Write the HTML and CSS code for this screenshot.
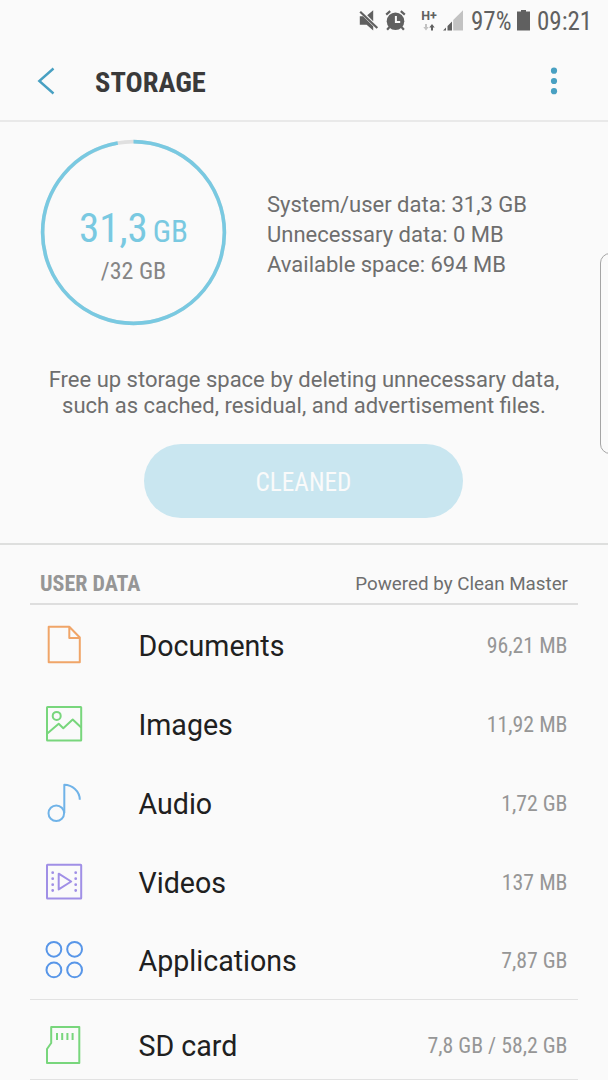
FILE: index.html
```html
<!DOCTYPE html>
<html lang="en">
<head>
<meta charset="utf-8">
<title>Storage</title>
<link rel="stylesheet" href="styles.css">
</head>
<body>
<div class="status">
  <svg class="mute" width="20" height="22" viewBox="0 0 20 22"><path d="M.8 6.2H4l10.2 10v4.2L7.6 14.8H.8zM8.2 5.2 14.2.2v11z"/><path class="slash" d="M1.2 1.8 18.3 18"/></svg>
  <svg class="alarm" width="22" height="22" viewBox="0 0 22 22"><circle cx="10.5" cy="11.2" r="8.8"/><path class="slash" d="m1.2 4.6 4-3.5M19.8 4.6l-4-3.5M4.5 17l-2.4 2.8M16.5 17l2.4 2.8"/><path class="hand" d="M10.9 6v6.1h4.3"/></svg>
  <div class="network"><span>H+</span><svg width="12" height="7" viewBox="0 0 12 7"><path class="down" d="M2 0h2v3h1.7L3 6.5.3 3H2z"/><path d="M8 6.5h2v-3h1.7L9 0 6.3 3.5H8z"/></svg></div>
  <svg class="signal" width="21" height="21" viewBox="0 0 21 21"><path class="weak" d="M10.2 10 20 .2v20.3h-9.8z"/><path d="M0 20.5 3 17.6v2.9zM4.5 16 9 11.6v8.9H4.5z"/></svg>
  <span class="cond pct">97%</span>
  <svg class="battery" width="13" height="21" viewBox="0 0 13 21"><path d="M4 0h5v1.6h4v18.9H0V1.6h4z"/></svg>
  <span class="cond clock">09:21</span>
</div>
<header class="bar">
  <svg class="back" width="18" height="28" viewBox="0 0 18 28"><path d="M16.5 1.5 2.3 14l14.2 12.5"/></svg>
  <h1 class="cond title">STORAGE</h1>
  <svg class="more" width="8" height="28" viewBox="0 0 8 28"><circle cx="4" cy="3.7" r="3.1"/><circle cx="4" cy="14" r="3.1"/><circle cx="4" cy="24.2" r="3.1"/></svg>
</header>
<section class="overview">
  <div class="usage">
    <div class="gauge">
      <svg class="ring" width="187" height="187" viewBox="0 0 187 187"><circle class="track" cx="93.5" cy="93.5" r="90.9"/><circle class="fill" cx="93.5" cy="93.5" r="90.9" pathLength="360" stroke-dasharray="350 10"/></svg>
      <div class="amount cond"><span class="num">31,3</span><span class="unit">GB</span></div>
      <div class="total cond">/32 GB</div>
    </div>
    <div class="facts">
      <div>System/user data: 31,3 GB</div>
      <div>Unnecessary data: 0 MB</div>
      <div>Available space: 694 MB</div>
    </div>
  </div>
  <p class="hint">Free up storage space by deleting unnecessary data,<br>such as cached, residual, and advertisement files.</p>
  <button class="clean cond">CLEANED</button>
</section>
<section class="userdata">
  <div class="heading"><h2 class="cond">USER DATA</h2><span class="powered">Powered by Clean Master</span></div>
  <div class="row"><svg class="icon doc" viewBox="0 0 40 40"><path d="M4.7 1.7H25.3L35.8 12.5V37.2H4.7zM25.3 2V13H35.6"/></svg><span class="name">Documents</span><span class="size cond">96,21 MB</span></div>
  <div class="row"><svg class="icon img" viewBox="0 0 40 40"><rect x="3" y="2.9" width="34.2" height="33.7" rx=".5"/><circle cx="12.7" cy="11.9" r="4"/><path d="m3.3 29.5 11.4-9.8 4.6 4.5 9.4-8.7 8.5 8"/></svg><span class="name">Images</span><span class="size cond">11,92 MB</span></div>
  <div class="row"><svg class="icon audio" viewBox="0 0 40 40"><circle cx="12.3" cy="30.2" r="7.8"/><path d="M20.3 30V1.7C28 1.7 35.8 8 35.8 16.8"/></svg><span class="name">Audio</span><span class="size cond">1,72 GB</span></div>
  <div class="row"><svg class="icon video" viewBox="0 0 40 40"><rect x="3" y="2.8" width="34.2" height="33.7" rx=".5"/><path d="M14.7 11.7V27.4L27.2 19.5z"/><path class="dots" d="M8.7 10.7h0M8.7 16.7h0M8.7 22.7h0M8.7 28.5h0M31.7 10.7h0M31.7 16.7h0M31.7 22.7h0M31.7 28.5h0"/></svg><span class="name">Videos</span><span class="size cond">137 MB</span></div>
  <div class="row"><svg class="icon apps" viewBox="0 0 40 40"><circle cx="9.9" cy="9.3" r="7.4"/><circle cx="30.6" cy="9.3" r="7.4"/><circle cx="9.9" cy="29.9" r="7.4"/><circle cx="30.6" cy="29.9" r="7.4"/></svg><span class="name">Applications</span><span class="size cond">7,87 GB</span></div>
  <div class="row card"><svg class="icon sd" viewBox="0 0 40 40"><path d="M7.2 2H35.3V38H3V24l4.2-6z"/><path d="M13 8v7M18.2 8v7M23.4 8v7M28.6 8v7"/></svg><span class="name">SD card</span><span class="size cond">7,8 GB / 58,2 GB</span></div>
</section>
<div class="edge-handle"></div>
</body>
</html>
```
FILE: styles.css
```css
* { box-sizing: border-box; }
body { margin: 0; width: 608px; height: 1080px; position: relative; overflow: hidden; background: #fafafa; color: #6e6e6e; font-family: Roboto, sans-serif; }
svg { display: block; flex: none; }
h1, h2, p { margin: 0; }
.cond { font-family: "Roboto Condensed", Roboto, sans-serif; font-stretch: 75%; white-space: nowrap; }

.status { height: 42px; display: flex; align-items: flex-start; padding: 10px 0 0 359px; color: #606060; }
.status svg { fill: #606060; }
.status .slash { fill: none; stroke: #606060; stroke-width: 2.2; }
.status .hand { fill: none; stroke: #fafafa; stroke-width: 2; }
.alarm { margin-left: 6px; }
.network { width: 18px; margin-left: 13px; display: flex; flex-direction: column; align-items: center; gap: 2px; }
.network span { font-size: 12.5px; line-height: 12px; font-weight: 700; }
.network .down, .signal .weak { fill: #c2c2c2; }
.signal { margin-left: 5px; }
.pct { margin-left: 7px; width: 42px; font-size: 25px; line-height: 23px; }
.battery { margin-left: 4px; }
.clock { margin-left: 7px; font-size: 25px; line-height: 23px; }

.bar { height: 80px; display: flex; align-items: center; padding: 0 50px 0 37px; border-bottom: 2px solid #e9e9e9; }
.back { fill: none; stroke: #48a0c2; stroke-width: 2.4; }
.title { margin-left: 40px; padding-top: 3px; font-size: 28.5px; line-height: 32px; font-weight: 700; color: #3a3a3a; }
.more { margin-left: auto; fill: #48a0c2; }

.overview { height: 423px; border-bottom: 2px solid #dedfde; display: flex; flex-direction: column; align-items: center; }
.usage { width: 608px; padding: 17.3px 0 0 40px; display: flex; }
.gauge { display: grid; width: 187px; height: 187px; grid-template-rows: 63px 53px 30px 1fr; justify-items: center; }
.ring { grid-area: 1 / 1 / 5 / 2; fill: none; stroke-width: 3.6; }
.track { stroke: #e0e0e0; }
.fill { stroke: #79c9e1; transform: rotate(-90deg); transform-origin: center; }
.amount { grid-area: 2 / 1; display: flex; align-items: baseline; gap: 5px; color: #79c9e1; line-height: 53px; }
.num { font-size: 41px; }
.unit { font-size: 31px; }
.total { grid-area: 3 / 1; padding-top: 1px; font-size: 24px; line-height: 30px; color: #858585; }
.facts { margin: 51px 0 0 40px; font-size: 22px; line-height: 30px; }
.hint { margin-top: 41px; font-size: 22px; line-height: 26px; text-align: center; white-space: nowrap; }
.clean { margin: 25px 1px 0 0; width: 319px; height: 74px; padding: 3px 0 0; border: 0; border-radius: 37px; background: #c9e6f0; color: #fafafa; font-size: 25.2px; }

.userdata { padding: 0 30px; }
.heading { height: 60px; padding: 19px 10px 0; display: flex; justify-content: space-between; border-bottom: 2px solid #dedede; line-height: 40px; }
.heading h2 { font-size: 22px; font-weight: 700; color: #969696; }
.powered { font-size: 18.8px; }
.row { height: 78.75px; display: flex; align-items: center; padding: 0 10px 0 14px; }
.icon { width: 40px; height: 40px; margin-top: 2px; fill: none; stroke-width: 2; stroke-linejoin: round; }
.doc { stroke: #f0a568; }
.img, .sd { stroke: #78d67c; }
.audio { stroke: #70b3e8; }
.video { stroke: #a08fe6; }
.apps { stroke: #5896e8; }
.dots { stroke-width: 2.8; stroke-linecap: round; }
.name { margin-left: 54.5px; padding-top: 4px; font-size: 28.6px; color: #202020; }
.size { margin-left: auto; padding: 3px .5px 0 0; font-size: 21.8px; color: #969696; }
.card { height: 81px; padding-top: 10px; border-top: 1px solid #e2e2e2; border-bottom: 1px solid #e2e2e2; }
.edge-handle { position: absolute; left: 600px; top: 253px; width: 20px; height: 201px; border: 1px solid #a5a5a5; border-radius: 12px; }
```
